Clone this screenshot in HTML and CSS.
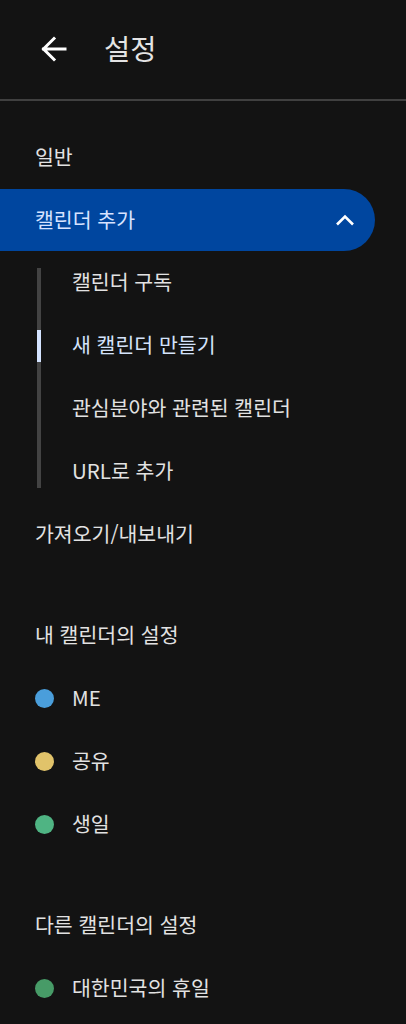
FILE: index.html
```html
<!DOCTYPE html>
<html lang="ko">
<head>
<meta charset="utf-8">
<link rel="stylesheet" href="styles.css">
</head>
<body>
<div class="page">
  <header class="topbar">
    <svg class="back" width="28" height="28" viewBox="0 0 28 28" aria-hidden="true">
      <path d="M25 14H3.5M14 3.5L3.5 14L14 24.5" fill="none" stroke="#ffffff" stroke-width="3" stroke-linecap="square" stroke-linejoin="miter"/>
    </svg>
    <h1 class="title">설정</h1>
  </header>
  <div class="divider"></div>
  <nav class="list">
    <div class="row">일반</div>
    <div class="row row-selected">
      <span>캘린더 추가</span>
      <svg class="chev" width="20" height="12" viewBox="0 0 20 12" aria-hidden="true">
        <path d="M2 10.5L10 2.5L18 10.5" fill="none" stroke="#ffffff" stroke-width="2.6"/>
      </svg>
    </div>
    <div class="sub">
      <div class="row sub-row">캘린더 구독</div>
      <div class="row sub-row sub-active">새 캘린더 만들기</div>
      <div class="row sub-row">관심분야와 관련된 캘린더</div>
      <div class="row sub-row">URL로 추가</div>
    </div>
    <div class="row">가져오기/내보내기</div>

    <div class="row heading">내 캘린더의 설정</div>
    <div class="row cal"><span class="dot dot-blue"></span>ME</div>
    <div class="row cal"><span class="dot dot-yellow"></span>공유</div>
    <div class="row cal"><span class="dot dot-green"></span>생일</div>

    <div class="row heading">다른 캘린더의 설정</div>
    <div class="row cal"><span class="dot dot-dkgreen"></span>대한민국의 휴일</div>
  </nav>
</div>
</body>
</html>
```

FILE: styles.css
```css
html, body {
  margin: 0;
  padding: 0;
  background: #131313;
}
body {
  font-family: "Noto Sans CJK KR", "Noto Sans", Roboto, sans-serif;
  color: #e2e2e2;
  width: 406px;
  height: 1024px;
  overflow: hidden;
}
.page {
  display: flex;
  flex-direction: column;
}
.topbar {
  height: 99px;
  display: flex;
  align-items: center;
  padding-left: 40px;
  box-sizing: border-box;
  padding-bottom: 2px;
}
.back {
  display: block;
  flex: none;
}
.title {
  margin: 0 0 0 36px;
  font-size: 28.5px;
  font-weight: 400;
  color: #e4e4e4;
  line-height: 1;
}
.divider {
  height: 2px;
  background: #404040;
}
.list {
  display: flex;
  flex-direction: column;
  padding-top: 25px;
}
.row {
  height: 63px;
  display: flex;
  align-items: center;
  padding-left: 35px;
  padding-bottom: 3px;
  font-size: 20.5px;
  box-sizing: border-box;
  flex: none;
}
.row-selected {
  height: 62px;
  background: #00469f;
  border-radius: 0 31px 31px 0;
  width: 375px;
  color: #d7e3ff;
  justify-content: space-between;
  padding-right: 20px;
}
.chev {
  display: block;
  margin-top: 3px;
}
.sub {
  position: relative;
  display: flex;
  flex-direction: column;
}
.sub::before {
  content: "";
  position: absolute;
  left: 37px;
  width: 4px;
  top: 17px;
  bottom: 15px;
  background: #434343;
}
.sub-row {
  padding-left: 72px;
  position: relative;
}
.sub-active {
  color: #d4e3fb;
}
.sub-active::before {
  content: "";
  position: absolute;
  left: 37px;
  width: 4px;
  top: 16px;
  height: 32px;
  background: #d4e3ff;
}
.heading {
  margin-top: 38px;
}
.cal {
  padding-left: 35px;
}
.dot {
  width: 19px;
  height: 19px;
  border-radius: 50%;
  margin-right: 18px;
  margin-top: 3px;
  flex: none;
}
.dot-blue { background: #4a9edb; }
.dot-yellow { background: #e1c36a; }
.dot-green { background: #4fb483; }
.dot-dkgreen { background: #479b67; }
```
